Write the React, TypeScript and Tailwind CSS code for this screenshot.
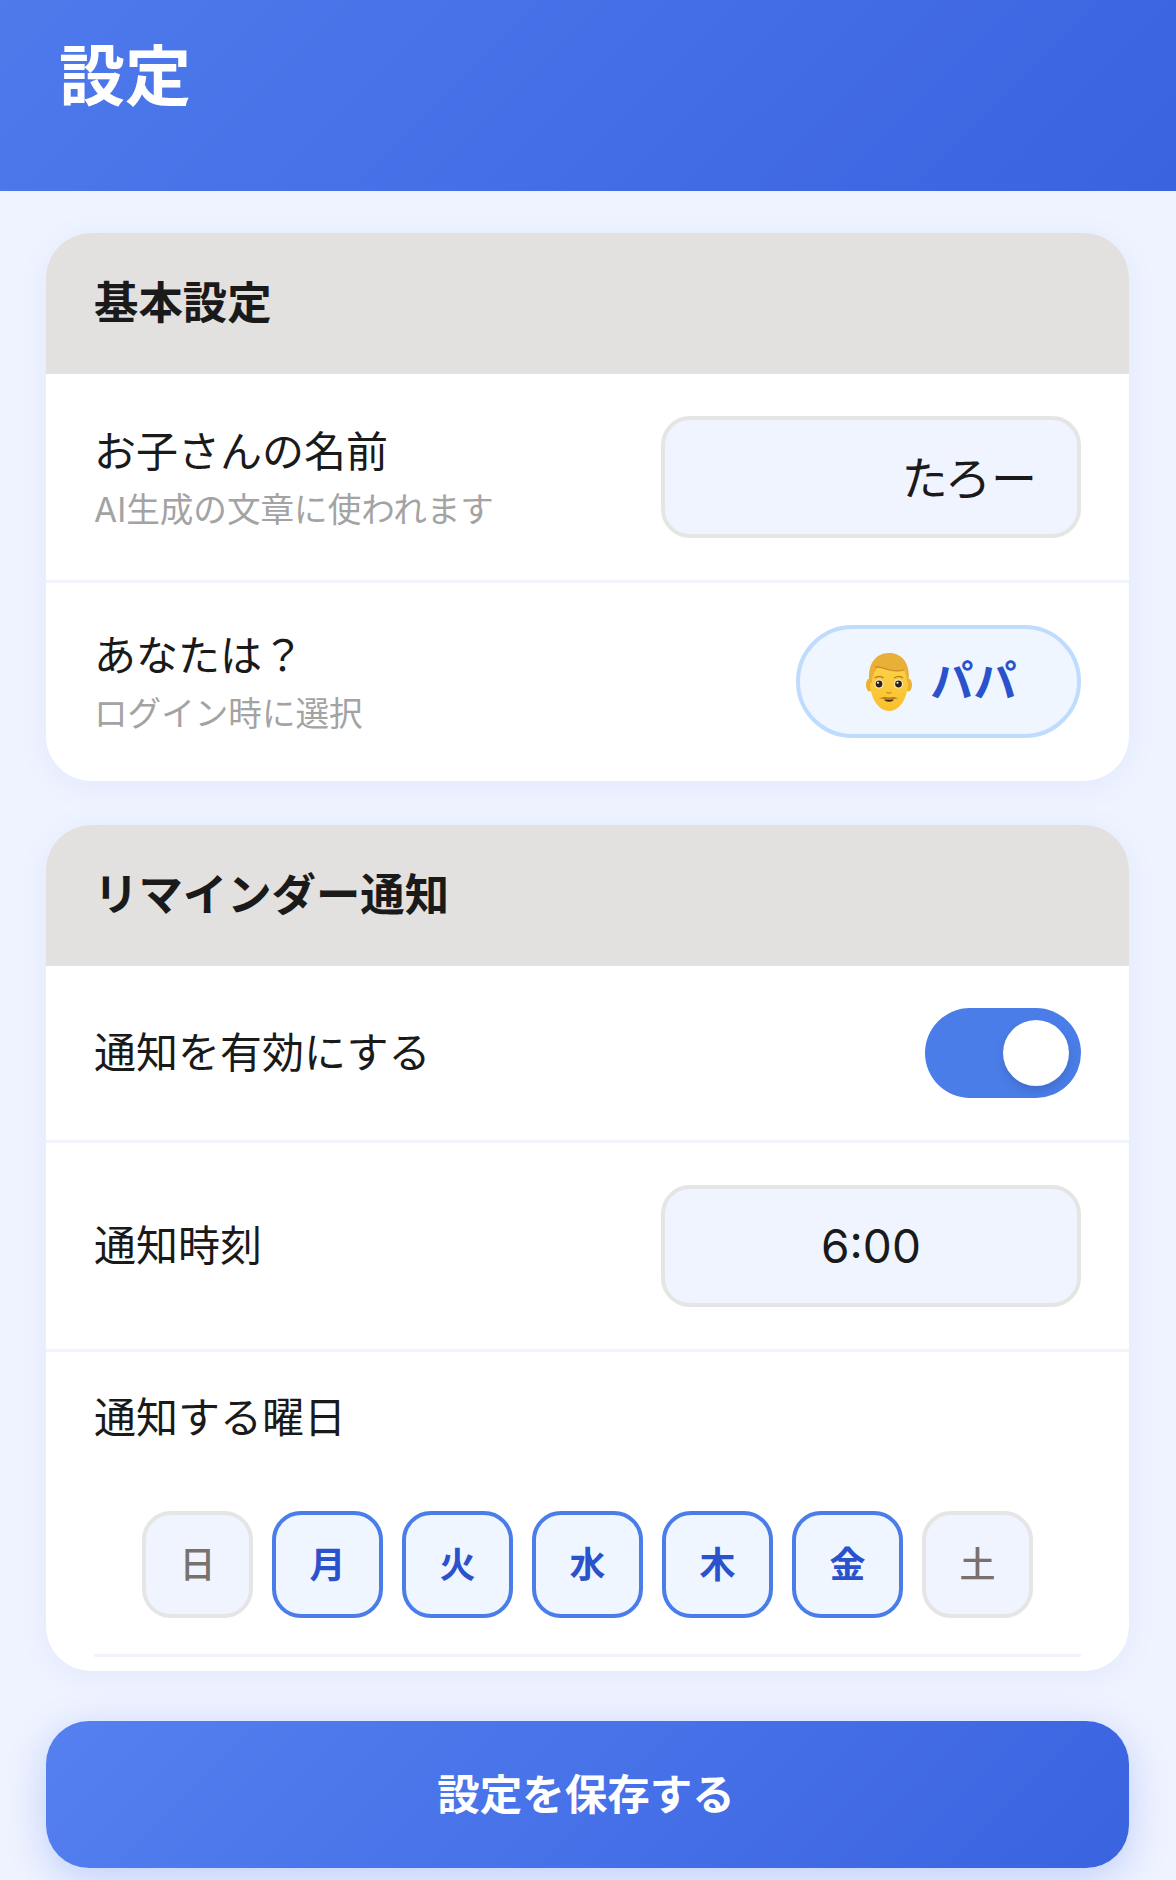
import React from 'react'

const days = [
  { label: '日', on: false },
  { label: '月', on: true },
  { label: '火', on: true },
  { label: '水', on: true },
  { label: '木', on: true },
  { label: '金', on: true },
  { label: '土', on: false },
]

function ManEmoji() {
  return (
    <svg viewBox="0 0 46 58" className="h-[58px] w-[46px] shrink-0">
      <defs>
        <linearGradient id="face" x1="0" y1="0" x2="0" y2="1">
          <stop offset="0" stopColor="#fcd34d" />
          <stop offset="1" stopColor="#f9c02c" />
        </linearGradient>
      </defs>
      <ellipse cx="3.500" cy="32" rx="3.500" ry="6.500" fill="#eeb02f" />
      <ellipse cx="42.500" cy="32" rx="3.500" ry="6.500" fill="#eeb02f" />
      <path d="M4 26C3 42 11 58 23 58S43 42 42 26C41 12 33 6 23 6S5 12 4 26Z" fill="url(#face)" />
      <path d="M3.500 30C1 12 9 0 23 0c13 0 22 10 19.500 30l-1.500-.500c0-5-1-9-3-12.500-4 1.500-7 1.500-11 .500-5-1.200-11-3.500-15-3-3 3-6 8-6 15.500Z" fill="#e9b038" />
      <path d="M9 14c5-.5 10 1.800 15 3 4 1 9 1.500 14 0" stroke="#c98a20" strokeWidth="1.200" fill="none" />
      <circle cx="13" cy="31" r="4.500" fill="#fdf0c0" />
      <circle cx="32.500" cy="31" r="4.500" fill="#fdf0c0" />
      <circle cx="13" cy="31" r="3.400" fill="#2b2118" />
      <circle cx="32.500" cy="31" r="3.400" fill="#2b2118" />
      <circle cx="12" cy="29.800" r="1" fill="#fff" />
      <circle cx="31.500" cy="29.800" r="1" fill="#fff" />
      <path d="M8.500 25c3-2 7-2 9 0M28 25c3-2 7-2 9 0" stroke="#b9821f" strokeWidth="1.500" fill="none" />
      <path d="M20.500 39c1.500 1.500 3.500 1.500 5 0" stroke="#d9962a" strokeWidth="1.500" fill="none" />
      <path d="M13 45.500c3-1.500 6.500-2 10-1 3.500-1 7-.500 10 1-3 0-5 .300-6 1-3 1.600-5 1.600-8 0-1-.700-3-1-6-1Z" fill="#b27c20" />
      <path d="M18 46.500c3.300.8 6.700.8 10 0-2 3-8 3-10 0Z" fill="#3b2412" />
    </svg>
  )
}

function SectionTitle({ children }: { children: React.ReactNode }) {
  return (
    <div className="flex h-[141px] items-center bg-[#e2e1df] px-[48px] pb-[1px]">
      <h2 className="text-[44.4px] leading-[48px] font-bold text-[#1a1a1a]">{children}</h2>
    </div>
  )
}

function Label({ title, sub }: { title: string; sub?: string }) {
  return (
    <div className={sub ? 'pt-[2px]' : ''}>
      <div className="text-[42px] leading-[52px] text-[#1a1a1a]">{title}</div>
      {sub && <div className="mt-[11px] text-[33.6px] leading-[42px] text-[#a3a3a3]">{sub}</div>}
    </div>
  )
}

function FieldInput({ value, align }: { value: string; align: string }) {
  return (
    <input
      readOnly
      value={value}
      className={`h-[122px] w-[420px] rounded-[29px] border-[4px] border-[#e5e5e5] bg-[#f0f4fe] px-[40px] text-[46px] text-[#1a1a1a] outline-none ${align}`}
    />
  )
}

export default function App() {
  return (
    <div className="min-h-screen overflow-hidden bg-[#eff3ff] font-['Inter','Noto_Sans_CJK_JP',sans-serif]">
      <header className="h-[191px] bg-[linear-gradient(135deg,#4e7aec,#3a63e0)] px-[59px] pt-[38px]">
        <h1 className="text-[66px] leading-[76px] font-bold text-white">設定</h1>
      </header>

      <main className="flex flex-col gap-[44px] pt-[42px] pr-[47px] pl-[46px]">
        <section className="overflow-hidden rounded-[45px] bg-white shadow-[0_5px_29px_rgba(79,125,239,0.08)]">
          <SectionTitle>基本設定</SectionTitle>
          <div className="flex items-center justify-between border-b-[3px] border-[#f1f4fd] px-[48px] pt-[42px] pb-[42px]">
            <Label title="お子さんの名前" sub="AI生成の文章に使われます" />
            <FieldInput value="たろー" align="pb-[4px] text-right" />
          </div>
          <div className="flex items-center justify-between px-[48px] pt-[42px] pb-[43px]">
            <Label title="あなたは？" sub="ログイン時に選択" />
            <button className="flex h-[113px] w-[285px] items-center justify-center gap-[18px] rounded-full border-[4px] border-[#bfdbfe] bg-[#eff6ff] pl-[6px] text-[43.2px] font-bold text-[#2a52cc]">
              <ManEmoji />
              <span>パパ</span>
            </button>
          </div>
        </section>

        <section className="overflow-hidden rounded-[45px] bg-white shadow-[0_5px_29px_rgba(79,125,239,0.08)]">
          <SectionTitle>リマインダー通知</SectionTitle>
          <div className="flex items-center justify-between border-b-[3px] border-[#f1f4fd] px-[48px] pt-[42px] pb-[42px]">
            <Label title="通知を有効にする" />
            <div className="flex h-[90px] w-[156px] items-center justify-end rounded-full bg-[#4a7de8] pr-[12px]">
              <div className="size-[66px] rounded-full bg-white shadow-[0_5px_10px_rgba(0,0,0,0.12)]" />
            </div>
          </div>
          <div className="flex items-center justify-between border-b-[3px] border-[#f1f4fd] px-[48px] pt-[42px] pb-[42px]">
            <Label title="通知時刻" />
            <FieldInput value="6:00" align="text-center" />
          </div>
          <div className="px-[48px] pt-[40px] pb-[14px]">
            <Label title="通知する曜日" />
            <div className="flex justify-center gap-[19px] border-b-[3px] border-[#f1f4fd] pt-[67px] pb-[36px]">
              {days.map((d) => (
                <div
                  key={d.label}
                  className={
                    d.on
                      ? 'flex h-[107px] w-[111px] items-center justify-center rounded-[29px] border-[4px] border-[#4a7de8] bg-[#eff6ff] text-[36px] font-bold text-[#2a52cc]'
                      : 'flex h-[107px] w-[111px] items-center justify-center rounded-[29px] border-[4px] border-[#e5e5e5] bg-[#f0f4fe] text-[36px] font-medium text-[#78716c]'
                  }
                >
                  {d.label}
                </div>
              ))}
            </div>
          </div>
        </section>

        <button className="mt-[6px] h-[147px] rounded-[43px] bg-[linear-gradient(135deg,#5480f0,#3a63e0)] pr-[3px] text-[42.5px] font-bold text-white shadow-[0_10px_38px_rgba(79,125,239,0.3)]">
          設定を保存する
        </button>
      </main>
    </div>
  )
}
